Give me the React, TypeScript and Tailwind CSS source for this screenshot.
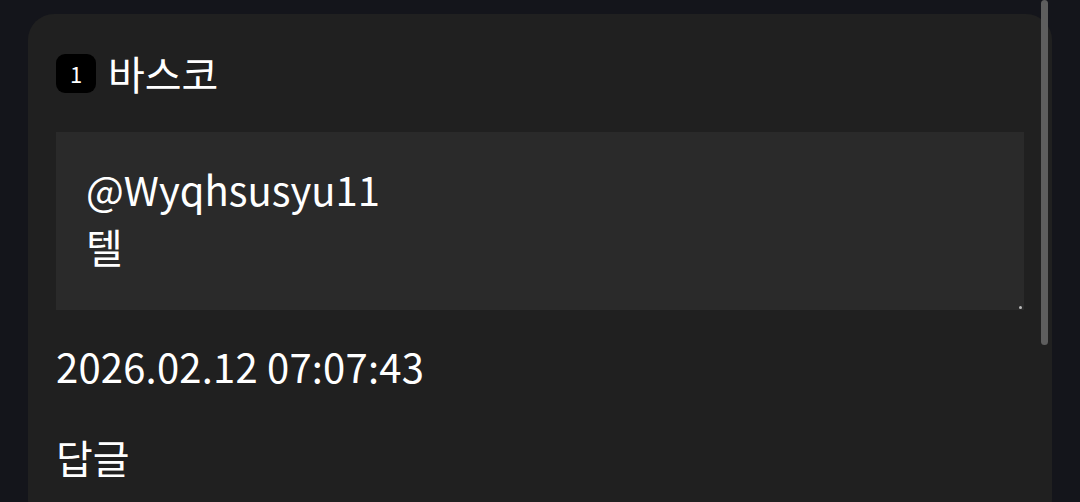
export default function App() {
  return (
    <div
      className="relative h-[502px] w-[1080px] overflow-hidden bg-[#14151b] text-white"
      style={{ fontFamily: '"Noto Sans CJK KR", "Noto Sans", sans-serif' }}
    >
      <div className="ml-[28px] mt-[14px] w-[1024px] rounded-[26px] bg-[#202020] px-[28px] pt-[39px] pb-[40px]">
        <div className="flex items-center gap-[12px]">
          <span className="flex h-[39px] w-[40px] items-center justify-center rounded-[9px] bg-black text-[22px] leading-none">
            1
          </span>
          <span className="text-[40px] leading-[40px]">바스코</span>
        </div>

        <div className="relative mt-[39px] h-[178px] bg-[#2a2a2a] px-[30px] pt-[29px] text-[40px] leading-[57px]">
          <div>@Wyqhsusyu11</div>
          <div>텔</div>
          <span className="absolute bottom-[1px] right-[2px] h-[3px] w-[3px] rounded-full bg-[#bbbbbb]" />
        </div>

        <div className="mt-[28px] text-[40px] leading-[56px] tracking-[0.2px]">2026.02.12 07:07:43</div>
        <div className="mt-[35px] text-[40px] leading-[56px]">답글</div>
      </div>

      <div className="absolute right-[32px] top-0 h-[345px] w-[7px] rounded-full bg-[#5e5e5e]" />
    </div>
  )
}
